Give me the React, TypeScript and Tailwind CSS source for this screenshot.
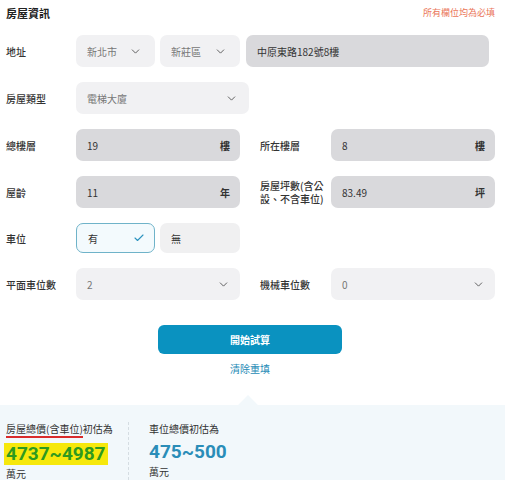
import React from 'react';
import { ChevronDown, Check } from 'lucide-react';

const font = { fontFamily: '"Noto Sans CJK TC", "Noto Sans", sans-serif' };
const numFont = { fontFamily: 'Roboto, "Noto Sans", sans-serif' };

// Select box (light grey, chevron on right)
const SelectBox = ({ value, className = '' }: { value: string; className?: string }) => (
  <div className={`h-[32px] rounded-[7px] bg-[#f1f1f3] flex items-center justify-between pl-[11px] ${className}`}>
    <span className="text-[10px] text-[#777]">{value}</span>
    <ChevronDown className="w-[13px] h-[13px] text-[#555]" strokeWidth={1.7} />
  </div>
);

// Filled input with unit at the right
const FilledInput = ({ value, unit, className = '' }: { value: string; unit?: string; className?: string }) => (
  <div className={`h-[32px] rounded-[7px] bg-[#d9d9dc] flex items-center justify-between pl-[11px] pr-[10px] ${className}`}>
    <span className="text-[10px] text-[#333]">{value}</span>
    {unit && <span className="text-[10px] font-bold text-[#333]">{unit}</span>}
  </div>
);

const Label = ({ children, className = '' }: { children: React.ReactNode; className?: string }) => (
  <div className={`text-[10px] font-medium text-[#333] leading-[13px] ${className}`}>{children}</div>
);

export default function App() {
  return (
    <div className="w-[505px] h-[480px] bg-white overflow-hidden" style={font}>
      <div className="pl-[6px] pr-[10px]">
        {/* Header */}
        <div className="flex items-center justify-between h-[26px]">
          <div className="text-[11px] font-bold text-[#222]">房屋資訊</div>
          <div className="text-[9px] text-[#ea7558]">所有欄位均為必填</div>
        </div>

        <div className="flex flex-col gap-[15px] mt-[9px]">
          {/* 地址 */}
          <div className="flex items-center">
            <Label className="w-[70px]">地址</Label>
            <SelectBox value="新北市" className="w-[79px] pr-[13px]" />
            <SelectBox value="新莊區" className="w-[80px] ml-[5px] pr-[13px]" />
            <FilledInput value="中原東路182號8樓" className="w-[243px] ml-[6px]" />
          </div>

          {/* 房屋類型 */}
          <div className="flex items-center">
            <Label className="w-[70px]">房屋類型</Label>
            <SelectBox value="電梯大廈" className="w-[173px] pr-[11px]" />
          </div>

          {/* 總樓層 / 所在樓層 */}
          <div className="flex items-center">
            <Label className="w-[70px]">總樓層</Label>
            <FilledInput value="19" unit="樓" className="w-[164px]" />
            <Label className="w-[71px] ml-[20px]">所在樓層</Label>
            <FilledInput value="8" unit="樓" className="w-[164px]" />
          </div>

          {/* 屋齡 / 房屋坪數 */}
          <div className="flex items-center">
            <Label className="w-[70px]">屋齡</Label>
            <FilledInput value="11" unit="年" className="w-[164px]" />
            <Label className="w-[71px] ml-[20px] pr-[6px]">房屋坪數(含公設、不含車位)</Label>
            <FilledInput value="83.49" unit="坪" className="w-[164px]" />
          </div>

          {/* 車位 */}
          <div className="flex items-center">
            <Label className="w-[70px]">車位</Label>
            <div className="w-[79px] h-[30px] rounded-[7px] border border-[#6fb3c9] bg-[#f3fafd] flex items-center justify-between pl-[11px] pr-[9px]">
              <span className="text-[10px] text-[#333]">有</span>
              <Check className="w-[12px] h-[12px] text-[#2c93bf]" strokeWidth={2.2} />
            </div>
            <div className="w-[80px] h-[30px] ml-[5px] rounded-[7px] bg-[#f0f0f1] flex items-center pl-[11px]">
              <span className="text-[10px] text-[#333]">無</span>
            </div>
          </div>

          {/* 平面車位數 / 機械車位數 */}
          <div className="flex items-center">
            <Label className="w-[70px]">平面車位數</Label>
            <SelectBox value="2" className="w-[164px] pr-[10px]" />
            <Label className="w-[71px] ml-[20px]">機械車位數</Label>
            <SelectBox value="0" className="w-[164px] pr-[10px]" />
          </div>
        </div>
      </div>

      {/* Actions */}
      <div className="mt-[25px] flex flex-col items-start pl-[158px]">
        <button className="w-[184px] h-[29px] rounded-[6px] bg-[#0a92c0] text-white text-[10px] font-bold">
          開始試算
        </button>
        <div className="w-[184px] text-center mt-[7px] text-[10px] text-[#1f8bb6]">清除重填</div>
      </div>

      {/* Results */}
      <div className="relative mt-[29px] bg-[#f2f8fb] h-[80px]">
        <div className="absolute left-[241px] -top-[7px] w-[14px] h-[14px] bg-[#f2f8fb] rotate-45" />
        <div className="flex pt-[17px]">
          <div className="w-[128px] pl-[6px] flex flex-col">
            <div className="text-[10px] text-[#333] leading-[14px]">
              <span className="border-b-2 border-[#d92b2b]">房屋總價(含車位)</span>初估為
            </div>
            <div className="mt-[5px]">
              <span
                className="inline-block bg-[#f6e80c] px-[2px] -ml-[2px] text-[19px] leading-[22px] font-bold text-[#2e9a1f]"
                style={numFont}
              >
                4737~4987
              </span>
            </div>
            <div className="text-[10px] text-[#333] leading-[12px] mt-[3px]">萬元</div>
          </div>
          <div className="border-l border-dashed border-[#d5dde2] pl-[20px] flex flex-col">
            <div className="text-[10px] text-[#333] leading-[14px]">車位總價初估為</div>
            <div className="mt-[5px] text-[19px] leading-[22px] font-bold text-[#2a8db8]" style={numFont}>
              475~500
            </div>
            <div className="text-[10px] text-[#333] leading-[12px] mt-[3px]">萬元</div>
          </div>
        </div>
      </div>
    </div>
  );
}
